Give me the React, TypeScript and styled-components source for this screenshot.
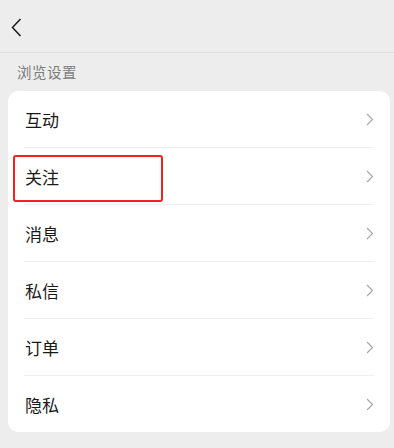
import * as React from 'react';
import styled, { createGlobalStyle } from 'styled-components';

const GlobalStyle = createGlobalStyle`
  html, body {
    margin: 0;
    padding: 0;
    background: #ededed;
    font-family: "Noto Sans CJK SC", "Noto Sans", sans-serif;
  }
`;

const Page = styled.div`
  width: 394px;
  height: 448px;
  background: #ededed;
  overflow: hidden;
`;

const NavBar = styled.header`
  display: flex;
  align-items: center;
  height: 53px;
  padding-left: 10px;
  border-bottom: 1px solid #e2e2e2;
  box-sizing: border-box;
`;

const BackButton = styled.button`
  display: flex;
  align-items: center;
  justify-content: center;
  padding: 0;
  border: none;
  background: transparent;
  width: 12px;
  height: 20px;
  margin-top: 3px;
`;

const SectionTitle = styled.div`
  padding: 9px 0 0 17px;
  height: 29px;
  line-height: 20px;
  font-size: 14.5px;
  color: #7c7c7c;
  letter-spacing: 0.5px;
`;

const Card = styled.div`
  margin: 0 4px 0 8px;
  background: #fff;
  border-radius: 10px;
`;

const Row = styled.div<{ $last?: boolean }>`
  position: relative;
  display: flex;
  align-items: center;
  justify-content: space-between;
  height: ${p => (p.$last ? '56px' : '57px')};
  margin: 0 16px;
  box-sizing: border-box;
  border-bottom: ${p => (p.$last ? 'none' : '1px solid #efefef')};
`;

const Label = styled.span`
  font-size: 17px;
  color: #191919;
  margin-left: 1px;
  margin-top: 1px;
`;

const Highlight = styled.div`
  position: absolute;
  left: -11px;
  top: 7px;
  width: 150px;
  height: 47px;
  border: 2.5px solid #f5221b;
  border-radius: 3px;
  box-sizing: border-box;
`;

const Chevron = () => (
  <svg width="8" height="13" viewBox="0 0 8 13" style={{ marginTop: 1 }}>
    <path d="M1 1 L6.5 6.5 L1 12" fill="none" stroke="#a8a8a8" strokeWidth="1.2" />
  </svg>
);

const items = ['互动', '关注', '消息', '私信', '订单', '隐私'];

export default function App() {
  return (
    <Page>
      <GlobalStyle />
      <NavBar>
        <BackButton aria-label="返回">
          <svg width="11" height="19" viewBox="0 0 11 19">
            <path d="M9.5 1 L1.5 9.5 L9.5 18" fill="none" stroke="#1a1a1a" strokeWidth="1.5" />
          </svg>
        </BackButton>
      </NavBar>
      <SectionTitle>浏览设置</SectionTitle>
      <Card>
        {items.map((item, i) => (
          <Row key={item} $last={i === items.length - 1}>
            {item === '关注' && <Highlight />}
            <Label>{item}</Label>
            <Chevron />
          </Row>
        ))}
      </Card>
    </Page>
  );
}
